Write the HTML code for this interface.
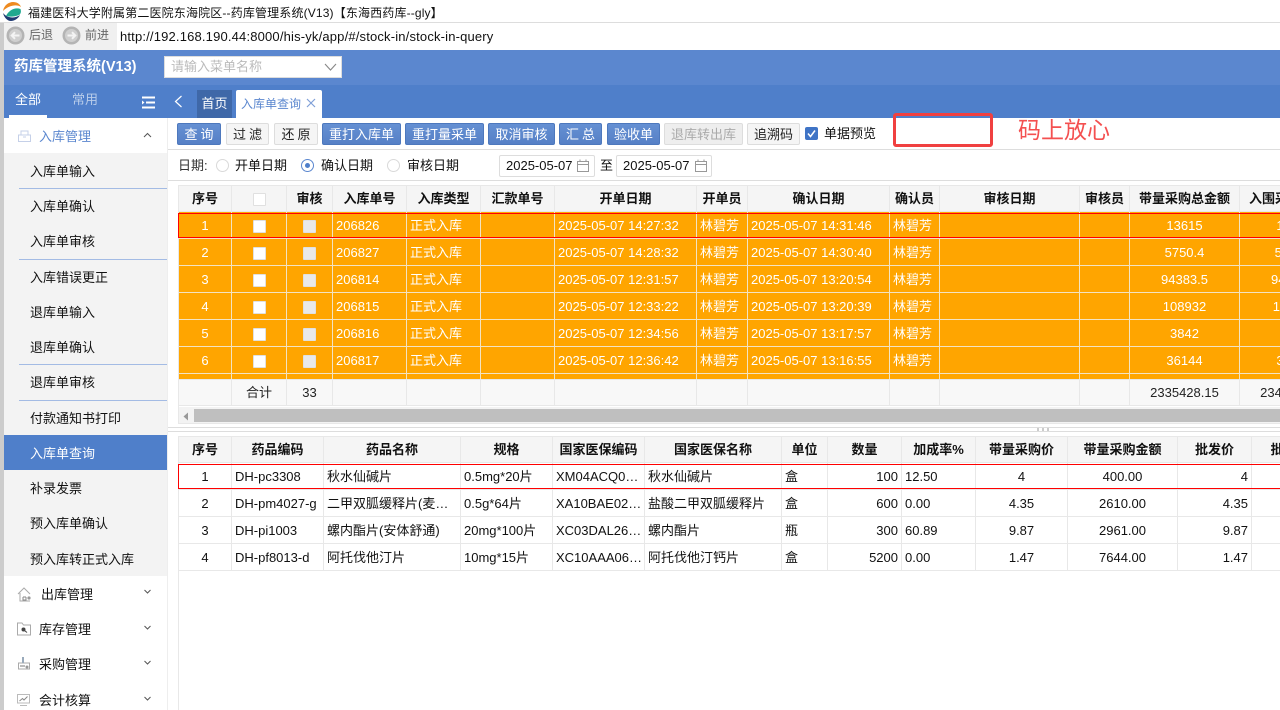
<!DOCTYPE html>
<html><head><meta charset="utf-8"><title>药库管理系统</title>
<style>
*{box-sizing:border-box}
html,body{margin:0;padding:0;width:1280px;height:710px;overflow:hidden;background:#fff}
body{position:relative;font:13px/1.2 "Liberation Sans","Noto Sans CJK SC",sans-serif;color:#111}
.a{position:absolute;white-space:nowrap}
.btn{position:absolute;top:123px;height:22px;line-height:20px;padding-top:1px;text-align:center;background:linear-gradient(#6590d3,#5680c6);border:1px solid #4d78bd;border-radius:2px;color:#fff;font-size:13px}
.btn.w{background:#f5f5f5;border-color:#ddd;color:#222}
.btn.d{background:#eee;border-color:#ddd;color:#aaa}
.sp{letter-spacing:3px;padding-left:3px}
.mi{position:absolute;left:30px;font-size:13px;line-height:16px;color:#111;white-space:nowrap}
.ln{position:absolute;left:19px;width:148px;height:1px;background:#a3bbe4}
.gp{position:absolute;font-size:13px;line-height:16px;color:#111;white-space:nowrap}
.rd{position:absolute;top:159px;width:13px;height:13px;border:1px solid #d9d9d9;border-radius:50%;background:#fff}
.date{position:absolute;top:155px;width:96px;height:22px;border:1px solid #ddd;border-radius:2px;line-height:20px;padding-left:6px;font-size:13px;background:#fff}
.tb{position:absolute;left:178px;overflow:hidden;width:1102px}
table{border-collapse:separate;border-spacing:0;table-layout:fixed;font-size:13px}
th,td{border-right:1px solid #e8e8e8;border-bottom:1px solid #e8e8e8;padding:1px 3px 0;white-space:nowrap;overflow:hidden;font-weight:normal}
th{background:#f5f5f5;font-weight:bold;text-align:center;color:#111;height:27px}
td{height:27px}
.or td{background:#ffa500;color:#fff;border-color:#f3e3c3}
.c{text-align:center}.r{text-align:right}
.ck{display:inline-block;width:13px;height:13px;background:#fff;vertical-align:middle;border:1px solid #e0e0e0;border-radius:1px}
.ck.g{background:#e9e9e9}
.sm td{background:#f8f8f8;color:#222;padding-top:2px}
.lo td{background:#fff;color:#111;height:27px}
</style></head><body>

<!-- title bar -->
<svg class="a" style="left:2px;top:2px" width="20" height="20" viewBox="0 0 20 20">
<path d="M1 9C2 3 7 0 11 0C15 0 18 2 19 5C15 2 7 3 1 9Z" fill="#ee8a1f"/>
<path d="M4 14C7 8 13 5 18.500 7C19.500 10 18.500 12 17 13C12 15 8 15 4 14Z" fill="#1fa88f"/>
<path d="M1 11C5 16 12 17 18 13C16 17 12 19 9 19C5 19 2 15 1 11Z" fill="#1f3a72"/>
</svg>
<div class="a" style="left:28px;top:6px;font-size:12px;color:#111;letter-spacing:.15px">福建医科大学附属第二医院东海院区--药库管理系统(V13)【东海西药库--gly】</div>
<div class="a" style="left:0;top:22px;width:1280px;height:1px;background:#ddd"></div>
<div class="a" style="left:0;top:23px;width:4px;height:687px;background:#ccc"></div>

<!-- browser toolbar -->
<div class="a" style="left:4px;top:23px;width:113px;height:27px;background:#f0f0f0"></div>
<svg class="a" style="left:6px;top:26px" width="19" height="19" viewBox="0 0 19 19"><circle cx="9.500" cy="9.500" r="9" fill="#b4b4b4"/><circle cx="9.500" cy="9.500" r="6.500" fill="#cfcfcf"/><path d="M13.500 9.500H6M9 6.200L5.700 9.500L9 12.800" stroke="#f4f4f4" stroke-width="2" fill="none"/></svg>
<div class="a" style="left:29px;top:28px;font-size:12px;color:#666">后退</div>
<svg class="a" style="left:62px;top:26px" width="19" height="19" viewBox="0 0 19 19"><circle cx="9.500" cy="9.500" r="9" fill="#b4b4b4"/><circle cx="9.500" cy="9.500" r="6.500" fill="#cfcfcf"/><path d="M5.500 9.500H13M10 6.200L13.300 9.500L10 12.800" stroke="#f4f4f4" stroke-width="2" fill="none"/></svg>
<div class="a" style="left:85px;top:28px;font-size:12px;color:#666">前进</div>
<div class="a" style="left:120px;top:29px;font-size:13px;color:#111;letter-spacing:.17px">http://192.168.190.44:8000/his-yk/app/#/stock-in/stock-in-query</div>

<!-- header -->
<div class="a" style="left:4px;top:50px;width:1276px;height:35px;background:#5b87cf"></div>
<div class="a" style="left:14px;top:59px;font-size:14.500px;font-weight:bold;color:#fff">药库管理系统(V13)</div>
<div class="a" style="left:164px;top:56px;width:178px;height:22px;background:#fff;border:1px solid #ddd;padding-left:6px;line-height:20px;color:#bbb;font-size:13px">请输入菜单名称</div>
<svg class="a" style="left:324px;top:62px" width="13" height="10" viewBox="0 0 13 10"><path d="M1 2L6.500 8L12 2" stroke="#888" stroke-width="1.100" fill="none"/></svg>

<!-- tab bar -->
<div class="a" style="left:4px;top:85px;width:1276px;height:33px;background:#4f7fca"></div>
<div class="a" style="left:15px;top:92px;color:#fff;font-size:13px">全部</div>
<div class="a" style="left:9px;top:115px;width:38px;height:3px;background:#fff"></div>
<div class="a" style="left:72px;top:92px;color:#b9cdea;font-size:13px">常用</div>
<svg class="a" style="left:142px;top:96px" width="13" height="13" viewBox="0 0 13 13"><path d="M0 1.500H13M4 6.500H13M0 11.500H13" stroke="#fff" stroke-width="2"/><path d="M0 4.500L2.500 6.500L0 8.500Z" fill="#fff"/></svg>
<svg class="a" style="left:174px;top:95px" width="9" height="13" viewBox="0 0 9 13"><path d="M7.500 1L1.500 6.500L7.500 12" stroke="#fff" stroke-width="1.200" fill="none"/></svg>
<div class="a" style="left:197px;top:90px;width:35px;height:28px;background:#3f68a8;color:#fff;text-align:center;line-height:28px">首页</div>
<div class="a" style="left:236px;top:90px;width:86px;height:28px;background:#fff;border-radius:2px 2px 0 0;color:#5b87cf;padding-left:5px;line-height:28px;font-size:12px">入库单查询</div>
<svg class="a" style="left:306px;top:98px" width="10" height="10" viewBox="0 0 10 10"><path d="M1 1L9 9M9 1L1 9" stroke="#7fa0d8" stroke-width="1.200"/></svg>

<!-- sidebar -->
<div class="a" style="left:4px;top:118px;width:164px;height:592px;background:#fff;border-right:1px solid #eee"></div>
<div class="a" style="left:4px;top:153px;width:163px;height:423px;background:#f3f3f3"></div>
<svg class="a" style="left:18px;top:130px" width="13" height="12" viewBox="0 0 13 12"><path d="M.5 5H12.500V11.500H.5ZM3 5V1H10V5M5 7H8" stroke="#c5d0e8" fill="none"/></svg>
<div class="gp" style="left:39px;top:129px;color:#5b87cf">入库管理</div>
<svg class="a" style="left:143px;top:132px" width="9" height="6" viewBox="0 0 9 6"><path d="M1 5L4.500 1.500L8 5" stroke="#555" fill="none"/></svg>
<div class="mi" style="top:164px">入库单输入</div><div class="ln" style="top:188px"></div>
<div class="mi" style="top:199px">入库单确认</div>
<div class="mi" style="top:234px">入库单审核</div><div class="ln" style="top:259px"></div>
<div class="mi" style="top:270px">入库错误更正</div>
<div class="mi" style="top:305px">退库单输入</div>
<div class="mi" style="top:340px">退库单确认</div><div class="ln" style="top:364px"></div>
<div class="mi" style="top:375px">退库单审核</div><div class="ln" style="top:400px"></div>
<div class="mi" style="top:411px">付款通知书打印</div>
<div class="a" style="left:4px;top:435px;width:163px;height:35px;background:#4f7fca"></div>
<div class="mi" style="top:446px;color:#fff">入库单查询</div>
<div class="mi" style="top:481px">补录发票</div>
<div class="mi" style="top:516px">预入库单确认</div>
<div class="mi" style="top:552px">预入库转正式入库</div>

<svg class="a" style="left:17px;top:587px" width="15" height="15" viewBox="0 0 15 15"><path d="M1 7L7 1L13 7M3 6V14H13" stroke="#aaa" fill="none"/><path d="M6 10H9M6 10V13H9V10" stroke="#888" fill="none"/><circle cx="12" cy="11" r="1.600" fill="#999"/></svg>
<div class="gp" style="left:41px;top:587px">出库管理</div>
<svg class="a" style="left:143px;top:589px" width="9" height="6" viewBox="0 0 9 6"><path d="M1.500 1L4.500 4L7.500 1" stroke="#555" fill="none"/></svg>
<svg class="a" style="left:17px;top:622px" width="14" height="14" viewBox="0 0 14 14"><path d="M.5 1H5L6.500 3H13.500V13H.5Z" stroke="#aaa" fill="none"/><circle cx="6.500" cy="7.500" r="2" fill="#444"/><path d="M7.500 8.500L10 10.500" stroke="#444"/></svg>
<div class="gp" style="left:39px;top:622px">库存管理</div>
<svg class="a" style="left:143px;top:625px" width="9" height="6" viewBox="0 0 9 6"><path d="M1.500 1L4.500 4L7.500 1" stroke="#555" fill="none"/></svg>
<svg class="a" style="left:18px;top:657px" width="12" height="13" viewBox="0 0 12 13"><path d="M.5 6H11.500V12H.5Z" stroke="#aaa" fill="none"/><path d="M5 0V6" stroke="#9ab" stroke-width="2"/><path d="M2 9H7" stroke="#777"/><circle cx="9" cy="10" r="1.500" fill="#999"/></svg>
<div class="gp" style="left:39px;top:657px">采购管理</div>
<svg class="a" style="left:143px;top:660px" width="9" height="6" viewBox="0 0 9 6"><path d="M1.500 1L4.500 4L7.500 1" stroke="#555" fill="none"/></svg>
<svg class="a" style="left:17px;top:694px" width="13" height="12" viewBox="0 0 13 12"><path d="M.5 .5H12.500V9H.5ZM3 11.500H10" stroke="#bbb" fill="none"/><path d="M2.500 7L5.500 4.500L7 6L10.500 2.500" stroke="#888" fill="none"/></svg>
<div class="gp" style="left:39px;top:693px">会计核算</div>
<svg class="a" style="left:143px;top:696px" width="9" height="6" viewBox="0 0 9 6"><path d="M1.500 1L4.500 4L7.500 1" stroke="#555" fill="none"/></svg>

<!-- buttons -->
<div class="btn sp" style="left:177px;width:44px">查询</div>
<div class="btn w sp" style="left:226px;width:43px">过滤</div>
<div class="btn w sp" style="left:274px;width:44px">还原</div>
<div class="btn" style="left:322px;width:79px">重打入库单</div>
<div class="btn" style="left:405px;width:79px">重打量采单</div>
<div class="btn" style="left:488px;width:67px">取消审核</div>
<div class="btn sp" style="left:559px;width:43px">汇总</div>
<div class="btn" style="left:607px;width:53px">验收单</div>
<div class="btn d" style="left:664px;width:79px">退库转出库</div>
<div class="btn w" style="left:747px;width:53px">追溯码</div>
<svg class="a" style="left:805px;top:127px" width="13" height="13" viewBox="0 0 13 13"><rect width="13" height="13" rx="2" fill="#3f74c6"/><path d="M3 6.500L5.500 9.500L10 3.500" stroke="#fff" stroke-width="1.500" fill="none"/></svg>
<div class="a" style="left:824px;top:126px">单据预览</div>
<div class="a" style="left:168px;top:149px;width:1112px;height:1px;background:#ddd"></div>
<div class="a" style="left:893px;top:113px;width:100px;height:34px;border:3px solid #f04040;border-radius:3px"></div>
<div class="a" style="left:1018px;top:116px;font-size:23px;color:#f45050;line-height:28px">码上放心</div>

<!-- filter -->
<div class="a" style="left:178px;top:158px;color:#333">日期:</div>
<div class="rd" style="left:216px"></div>
<div class="a" style="left:235px;top:158px">开单日期</div>
<div class="rd" style="left:301px;border-color:#5b87cf"></div>
<div class="a" style="left:305px;top:163px;width:5px;height:5px;border-radius:50%;background:#4f7fca"></div>
<div class="a" style="left:321px;top:158px">确认日期</div>
<div class="rd" style="left:387px"></div>
<div class="a" style="left:407px;top:158px">审核日期</div>
<div class="date" style="left:499px">2025-05-07</div>
<div class="a" style="left:600px;top:158px">至</div>
<div class="date" style="left:616px">2025-05-07</div>
<svg class="a" style="left:577px;top:159px" width="12" height="13" viewBox="0 0 12 13"><path d="M.5 2.500H11.500V12.500H.5ZM.5 5.500H11.500M3 .5V3M9 .5V3" stroke="#999" fill="none"/></svg>
<svg class="a" style="left:695px;top:159px" width="12" height="13" viewBox="0 0 12 13"><path d="M.5 2.500H11.500V12.500H.5ZM.5 5.500H11.500M3 .5V3M9 .5V3" stroke="#999" fill="none"/></svg>
<div class="a" style="left:168px;top:180px;width:1112px;height:1px;background:#ddd"></div>

<!-- top table -->
<div class="tb" style="top:185px;height:194px;border-left:1px solid #e8e8e8;border-top:1px solid #e8e8e8">
<table style="width:1171px;margin-top:-1px">
<colgroup><col style="width:53px"><col style="width:55px"><col style="width:46px"><col style="width:74px"><col style="width:74px"><col style="width:74px"><col style="width:142px"><col style="width:51px"><col style="width:142px"><col style="width:50px"><col style="width:140px"><col style="width:50px"><col style="width:110px"><col style="width:110px"></colgroup>
<tr><th>序号</th><th><span class="ck"></span></th><th>审核</th><th>入库单号</th><th>入库类型</th><th>汇款单号</th><th>开单日期</th><th>开单员</th><th>确认日期</th><th>确认员</th><th>审核日期</th><th>审核员</th><th>带量采购总金额</th><th>入围采购总金额</th></tr>
<tr class="or"><td class="c">1</td><td class="c"><span class="ck"></span></td><td class="c"><span class="ck g"></span></td><td>206826</td><td>正式入库</td><td></td><td>2025-05-07 14:27:32</td><td>林碧芳</td><td>2025-05-07 14:31:46</td><td>林碧芳</td><td></td><td></td><td class="c">13615</td><td class="c">13615</td></tr>
<tr class="or"><td class="c">2</td><td class="c"><span class="ck"></span></td><td class="c"><span class="ck g"></span></td><td>206827</td><td>正式入库</td><td></td><td>2025-05-07 14:28:32</td><td>林碧芳</td><td>2025-05-07 14:30:40</td><td>林碧芳</td><td></td><td></td><td class="c">5750.4</td><td class="c">5750.4</td></tr>
<tr class="or"><td class="c">3</td><td class="c"><span class="ck"></span></td><td class="c"><span class="ck g"></span></td><td>206814</td><td>正式入库</td><td></td><td>2025-05-07 12:31:57</td><td>林碧芳</td><td>2025-05-07 13:20:54</td><td>林碧芳</td><td></td><td></td><td class="c">94383.5</td><td class="c">94383.5</td></tr>
<tr class="or"><td class="c">4</td><td class="c"><span class="ck"></span></td><td class="c"><span class="ck g"></span></td><td>206815</td><td>正式入库</td><td></td><td>2025-05-07 12:33:22</td><td>林碧芳</td><td>2025-05-07 13:20:39</td><td>林碧芳</td><td></td><td></td><td class="c">108932</td><td class="c">108932</td></tr>
<tr class="or"><td class="c">5</td><td class="c"><span class="ck"></span></td><td class="c"><span class="ck g"></span></td><td>206816</td><td>正式入库</td><td></td><td>2025-05-07 12:34:56</td><td>林碧芳</td><td>2025-05-07 13:17:57</td><td>林碧芳</td><td></td><td></td><td class="c">3842</td><td class="c">3842</td></tr>
<tr class="or"><td class="c">6</td><td class="c"><span class="ck"></span></td><td class="c"><span class="ck g"></span></td><td>206817</td><td>正式入库</td><td></td><td>2025-05-07 12:36:42</td><td>林碧芳</td><td>2025-05-07 13:16:55</td><td>林碧芳</td><td></td><td></td><td class="c">36144</td><td class="c">36144</td></tr>
<tr class="or"><td></td><td></td><td></td><td></td><td></td><td></td><td></td><td></td><td></td><td></td><td></td><td></td><td></td><td></td></tr>
</table></div>
<div class="a" style="left:178px;top:213px;width:1110px;height:25px;border:1px solid #f00"></div>

<!-- sum row -->
<div class="tb" style="top:379px;height:28px;border-left:1px solid #e8e8e8;border-top:1px solid #e8e8e8">
<table style="width:1171px;margin-top:-1px">
<colgroup><col style="width:53px"><col style="width:55px"><col style="width:46px"><col style="width:74px"><col style="width:74px"><col style="width:74px"><col style="width:142px"><col style="width:51px"><col style="width:142px"><col style="width:50px"><col style="width:140px"><col style="width:50px"><col style="width:110px"><col style="width:110px"></colgroup>
<tr class="sm"><td></td><td class="c">合计</td><td class="c">33</td><td></td><td></td><td></td><td></td><td></td><td></td><td></td><td></td><td></td><td class="c">2335428.15</td><td class="c">2345428.15</td></tr>
</table></div>

<!-- scrollbar -->
<div class="a" style="left:178px;top:407px;width:1102px;height:17px;background:#f3f3f3;border-left:1px solid #e8e8e8;border-bottom:1px solid #e8e8e8"></div>
<div class="a" style="left:194px;top:409px;width:1086px;height:13px;background:#bfbfbf"></div>
<svg class="a" style="left:183px;top:412px" width="6" height="9" viewBox="0 0 6 9"><path d="M5 .5V8.500L.5 4.500Z" fill="#999"/></svg>

<!-- splitter -->
<div class="a" style="left:168px;top:427px;width:1112px;height:1px;background:#ddd"></div>
<div class="a" style="left:168px;top:431px;width:1112px;height:1px;background:#ddd"></div>
<div class="a" style="left:1037px;top:428px;width:13px;height:3px;background:repeating-linear-gradient(90deg,#ccc 0 2px,#fff 2px 5px)"></div>

<!-- bottom table -->
<div class="a" style="left:178px;top:436px;width:1px;height:274px;background:#e8e8e8"></div>
<div class="tb" style="top:436px;height:135px;border-left:1px solid #e8e8e8;border-top:1px solid #e8e8e8">
<table style="width:1163px;margin-top:-1px">
<colgroup><col style="width:53px"><col style="width:92px"><col style="width:137px"><col style="width:92px"><col style="width:92px"><col style="width:137px"><col style="width:46px"><col style="width:74px"><col style="width:74px"><col style="width:92px"><col style="width:110px"><col style="width:74px"><col style="width:90px"></colgroup>
<tr><th>序号</th><th>药品编码</th><th>药品名称</th><th>规格</th><th>国家医保编码</th><th>国家医保名称</th><th>单位</th><th>数量</th><th>加成率%</th><th>带量采购价</th><th>带量采购金额</th><th>批发价</th><th>批发金额</th></tr>
<tr class="lo"><td class="c">1</td><td>DH-pc3308</td><td>秋水仙碱片</td><td>0.5mg*20片</td><td>XM04ACQ0…</td><td>秋水仙碱片</td><td>盒</td><td class="r">100</td><td>12.50</td><td class="c">4</td><td class="c">400.00</td><td class="r">4</td><td></td></tr>
<tr class="lo"><td class="c">2</td><td>DH-pm4027-g</td><td>二甲双胍缓释片(麦…</td><td>0.5g*64片</td><td>XA10BAE02…</td><td>盐酸二甲双胍缓释片</td><td>盒</td><td class="r">600</td><td>0.00</td><td class="c">4.35</td><td class="c">2610.00</td><td class="r">4.35</td><td></td></tr>
<tr class="lo"><td class="c">3</td><td>DH-pi1003</td><td>螺内酯片(安体舒通)</td><td>20mg*100片</td><td>XC03DAL26…</td><td>螺内酯片</td><td>瓶</td><td class="r">300</td><td>60.89</td><td class="c">9.87</td><td class="c">2961.00</td><td class="r">9.87</td><td></td></tr>
<tr class="lo"><td class="c">4</td><td>DH-pf8013-d</td><td>阿托伐他汀片</td><td>10mg*15片</td><td>XC10AAA06…</td><td>阿托伐他汀钙片</td><td>盒</td><td class="r">5200</td><td>0.00</td><td class="c">1.47</td><td class="c">7644.00</td><td class="r">1.47</td><td></td></tr>
</table></div>
<div class="a" style="left:178px;top:464px;width:1110px;height:25px;border:1px solid #f00"></div>

</body></html>
